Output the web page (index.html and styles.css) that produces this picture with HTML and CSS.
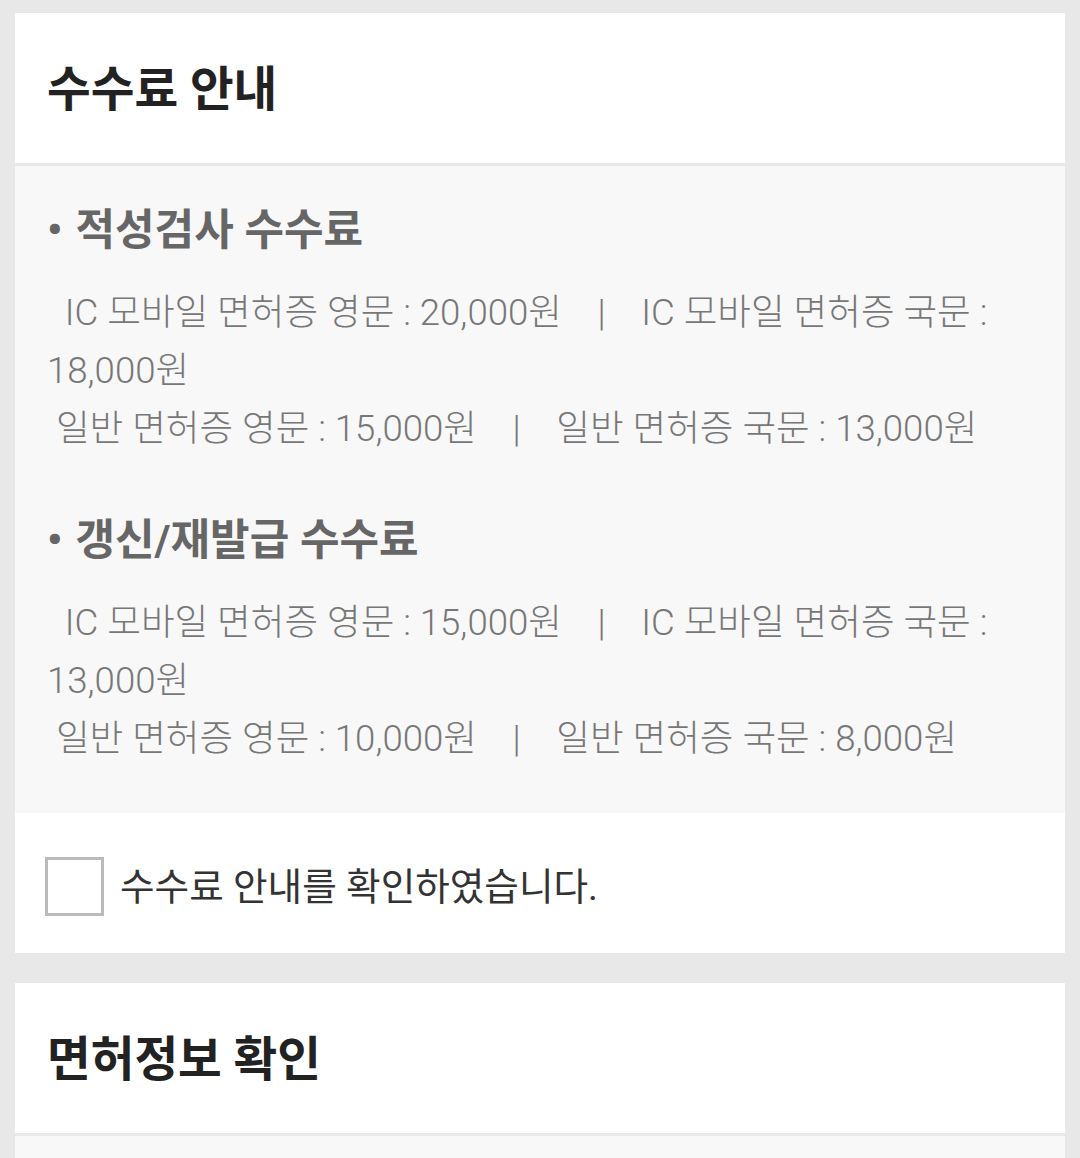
FILE: index.html
```html
<!DOCTYPE html>
<html lang="ko">
<head>
    <meta charset="UTF-8">
    <meta name="viewport" content="width=device-width, initial-scale=1.0">
    <title>수수료 안내</title>
    <link rel="stylesheet" href="styles.css">
</head>
<body>
    <section class="card">
        <header class="card-head">
            <h1>수수료 안내</h1>
        </header>
        <div class="fee-body">
            <h3 class="fee-title"><span class="dot">•</span>적성검사 수수료</h3>
            <p class="fee-text">&nbsp;&nbsp;IC 모바일 면허증 영문 : 20,000원 &nbsp;&nbsp;&nbsp;|&nbsp;&nbsp;&nbsp; IC 모바일 면허증 국문 : 18,000원<br>&nbsp;일반 면허증 영문 : 15,000원 &nbsp;&nbsp;&nbsp;|&nbsp;&nbsp;&nbsp; 일반 면허증 국문 : 13,000원</p>

            <h3 class="fee-title second"><span class="dot">•</span>갱신/재발급 수수료</h3>
            <p class="fee-text">&nbsp;&nbsp;IC 모바일 면허증 영문 : 15,000원 &nbsp;&nbsp;&nbsp;|&nbsp;&nbsp;&nbsp; IC 모바일 면허증 국문 : 13,000원<br>&nbsp;일반 면허증 영문 : 10,000원 &nbsp;&nbsp;&nbsp;|&nbsp;&nbsp;&nbsp; 일반 면허증 국문 : 8,000원</p>
        </div>
        <label class="agree">
            <input type="checkbox">
            <span class="box"></span>
            <span>수수료 안내를 확인하였습니다.</span>
        </label>
    </section>

    <section class="card">
        <header class="card-head">
            <h1>면허정보 확인</h1>
        </header>
        <div class="fee-body"></div>
    </section>
</body>
</html>
```

FILE: styles.css
```css
body {
    font-family: Roboto, "Noto Sans CJK KR", sans-serif;
    margin: 0;
    padding: 13px 15px 0;
    background-color: #e8e8e8;
}

.card {
    background: white;
    margin-bottom: 30px;
}

.card-head {
    height: 153px;
    display: flex;
    align-items: center;
    padding: 0 32px 6px;
    box-sizing: border-box;
    border-bottom: 3px solid #e8e8e8;
}

.card-head h1 {
    margin: 0;
    font-size: 47.5px;
    font-weight: bold;
    color: #222;
}

.fee-body {
    background-color: #f8f8f8;
    padding: 38px 32px 45px;
}

.fee-title {
    margin: 0;
    font-size: 43px;
    line-height: 52px;
    font-weight: bold;
    color: #666;
}

.fee-title .dot {
    margin-right: 13px;
}

.fee-title.second {
    margin-top: 56px;
}

.fee-text {
    margin: 28px 0 0;
    font-size: 36.6px;
    line-height: 58px;
    font-weight: 300;
    color: #777;
}

.agree {
    display: flex;
    align-items: center;
    height: 140px;
    padding: 0 30px;
    font-size: 37.6px;
    color: #333;
}

.agree input {
    display: none;
}

.agree .box {
    width: 53px;
    height: 53px;
    border: 3px solid #bbb;
    margin-right: 16px;
    margin-top: 6px;
}
```
